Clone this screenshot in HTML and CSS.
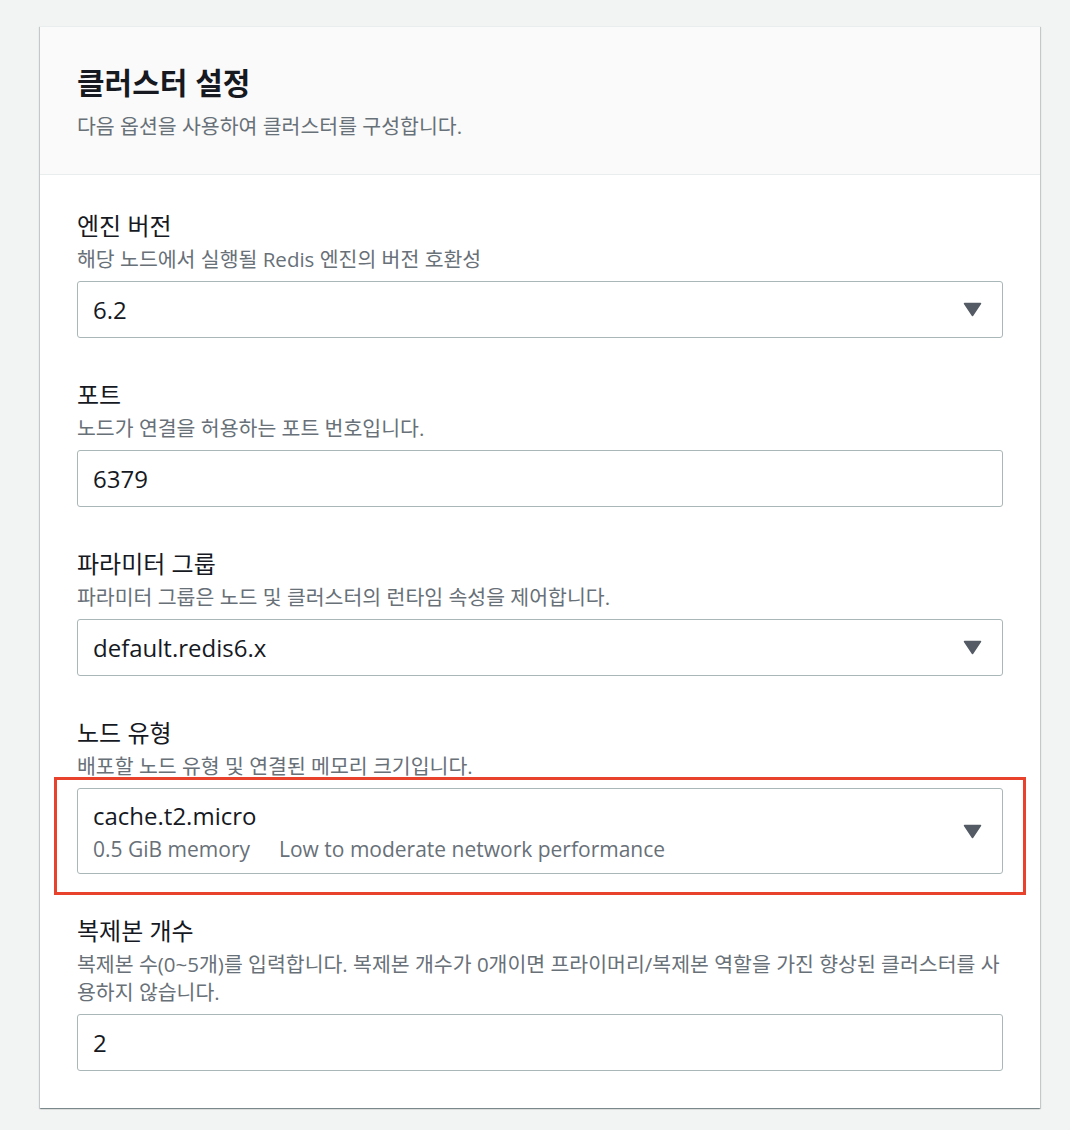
FILE: index.html
```html
<!DOCTYPE html>
<html lang="ko">

<head>
    <meta charset="UTF-8">
    <meta name="viewport" content="width=device-width, initial-scale=1.0">
    <title>클러스터 설정</title>
    <link rel="stylesheet" href="styles.css">
</head>

<body>
    <!-- 클러스터 설정 카드 -->
    <div class="container">
        <div class="container-header">
            <h2 class="title">클러스터 설정</h2>
            <p class="subtitle">다음 옵션을 사용하여 클러스터를 구성합니다.</p>
        </div>

        <div class="container-body">
            <!-- 엔진 버전 -->
            <div class="field">
                <div class="label">엔진 버전</div>
                <div class="desc">해당 노드에서 실행될 Redis 엔진의 버전 호환성</div>
                <div class="control">
                    <span class="value">6.2</span>
                    <svg class="caret" viewBox="0 0 19 15"><path d="M1.5 1.5 H17.5 L9.5 13.5 Z"/></svg>
                </div>
            </div>

            <!-- 포트 -->
            <div class="field">
                <div class="label">포트</div>
                <div class="desc">노드가 연결을 허용하는 포트 번호입니다.</div>
                <div class="control">
                    <span class="value">6379</span>
                </div>
            </div>

            <!-- 파라미터 그룹 -->
            <div class="field">
                <div class="label">파라미터 그룹</div>
                <div class="desc">파라미터 그룹은 노드 및 클러스터의 런타임 속성을 제어합니다.</div>
                <div class="control">
                    <span class="value">default.redis6.x</span>
                    <svg class="caret" viewBox="0 0 19 15"><path d="M1.5 1.5 H17.5 L9.5 13.5 Z"/></svg>
                </div>
            </div>

            <!-- 노드 유형 -->
            <div class="field">
                <div class="label">노드 유형</div>
                <div class="desc">배포할 노드 유형 및 연결된 메모리 크기입니다.</div>
                <div class="control control-tall">
                    <div class="option">
                        <span class="value">cache.t2.micro</span>
                        <span class="option-tags">
                            <span>0.5 GiB memory</span>
                            <span>Low to moderate network performance</span>
                        </span>
                    </div>
                    <svg class="caret" viewBox="0 0 19 15"><path d="M1.5 1.5 H17.5 L9.5 13.5 Z"/></svg>
                    <!-- 강조 표시 -->
                    <div class="highlight"></div>
                </div>
            </div>

            <!-- 복제본 개수 -->
            <div class="field">
                <div class="label">복제본 개수</div>
                <div class="desc desc-wide">복제본 수(0~5개)를 입력합니다. 복제본 개수가 0개이면 프라이머리/복제본 역할을 가진 향상된 클러스터를 사용하지 않습니다.</div>
                <div class="control">
                    <span class="value">2</span>
                </div>
            </div>
        </div>
    </div>
</body>

</html>
```

FILE: styles.css
```css
* {
    padding: 0;
    margin: 0;
    box-sizing: border-box;
}

body {
    background-color: #f2f3f3;
    font-family: "Open Sans", "Noto Sans CJK KR", sans-serif;
    color: #16191f;
}

.container {
    width: 1000px;
    margin: 26px 0 22px 40px;
    background-color: #fff;
    border-top: 1px solid #eaeded;
    box-shadow: 0 1px 1px 0 rgba(0, 28, 36, .3), 1px 1px 1px 0 rgba(0, 28, 36, .15), -1px 1px 1px 0 rgba(0, 28, 36, .15);
}

.container-header {
    background-color: #fafafa;
    border-bottom: 1px solid #eaeded;
    padding: 38px 37px 34px;
}

.title {
    font-size: 30px;
    font-weight: 700;
    line-height: 36px;
}

.subtitle {
    margin-top: 11px;
    font-size: 20.5px;
    line-height: 28px;
    color: #687078;
}

.container-body {
    display: flex;
    flex-direction: column;
    gap: 42px;
    padding: 36px 37px 37px;
}

.label {
    font-size: 24px;
    line-height: 30px;
}

.desc {
    margin-top: 4px;
    font-size: 20.5px;
    line-height: 28px;
    color: #687078;
}

/* 긴 설명은 입력란보다 살짝 넓게 줄바꿈 */
.desc-wide {
    margin-right: -8px;
}

.control {
    position: relative;
    display: flex;
    align-items: center;
    justify-content: space-between;
    height: 57px;
    margin-top: 8px;
    padding: 0 20px 0 15px;
    border: 1px solid #aab7b8;
    border-radius: 3px;
}

.control-tall {
    height: 86px;
}

.value {
    font-size: 24px;
    line-height: 34px;
}

.option {
    display: flex;
    flex-direction: column;
    padding-top: 2px;
}

.option-tags {
    display: flex;
    gap: 29px;
    font-size: 21px;
    line-height: 32px;
    color: #687078;
}

.caret {
    width: 19px;
    height: 15px;
    fill: #545b64;
    stroke: #545b64;
    stroke-width: 1.5;
    stroke-linejoin: round;
}

.highlight {
    position: absolute;
    top: -12px;
    left: -24px;
    right: -24px;
    bottom: -22px;
    border: 3px solid #e8412c;
    pointer-events: none;
}
```
